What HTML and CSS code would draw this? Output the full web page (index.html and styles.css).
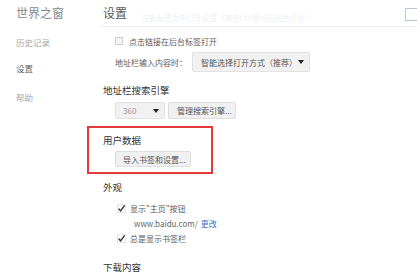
FILE: index.html
```html
<!DOCTYPE html>
<html lang="zh-CN">
<head>
<meta charset="utf-8">
<title>设置</title>
<link rel="stylesheet" href="styles.css">
</head>
<body>
<div class="page">
  <aside class="sidebar">
    <div class="brand">世界之窗</div>
    <div class="nav-item nav-history">历史记录</div>
    <div class="nav-item nav-settings active">设置</div>
    <div class="nav-item nav-help">帮助</div>
  </aside>
  <main class="main">
    <header class="header">
      <h1 class="title">设置</h1>
      <span class="hint">在新标签页中打开设置（按住Ctrl键可在后台打开）</span>
      <span class="search-box"></span>
    </header>

    <div class="row row-check first">
      <span class="checkbox"></span>
      <span class="label">点击链接在后台标签打开</span>
    </div>
    <div class="row row-select">
      <span class="label">地址栏输入内容时：</span>
      <span class="select select-wide"><span class="select-text">智能选择打开方式（推荐）</span><span class="caret"></span></span>
    </div>

    <div class="section-title s-search">地址栏搜索引擎</div>
    <div class="row row-engine">
      <span class="select select-small"><span class="select-text muted">360</span><span class="caret"></span></span>
      <span class="button">管理搜索引擎...</span>
    </div>

    <section class="highlight">
      <div class="section-title s-user">用户数据</div>
      <div class="row row-import">
        <span class="button">导入书签和设置...</span>
      </div>
    </section>

    <div class="section-title s-look">外观</div>
    <div class="row row-check look-1">
      <span class="checkbox checked"><svg width="9" height="9" viewBox="0 0 9 9"><path d="M1.6 4.6 L3.6 6.8 L7.6 1.4" fill="none" stroke="#333" stroke-width="1.4"/></svg></span>
      <span class="label">显示"主页"按钮</span>
    </div>
    <div class="row row-url">
      <span class="url">www.baidu.com/</span>
      <span class="link">更改</span>
    </div>
    <div class="row row-check look-2">
      <span class="checkbox checked"><svg width="9" height="9" viewBox="0 0 9 9"><path d="M1.6 4.6 L3.6 6.8 L7.6 1.4" fill="none" stroke="#333" stroke-width="1.4"/></svg></span>
      <span class="label">总是显示书签栏</span>
    </div>

    <div class="section-title s-download">下载内容</div>
  </main>
</div>
</body>
</html>
```
FILE: styles.css
```css
* { box-sizing: border-box; }
html, body {
  margin: 0;
  padding: 0;
  background: #fff;
  overflow: hidden;
}
body {
  font-family: "Noto Sans CJK SC", "Noto Sans", sans-serif;
  color: #555;
  width: 420px;
  height: 280px;
}
.page {
  display: flex;
  width: 420px;
  height: 280px;
}
.sidebar {
  width: 100px;
  flex-shrink: 0;
  padding-left: 16px;
}
.brand {
  font-size: 12px;
  line-height: 26px;
  height: 26px;
  color: #8a8a8a;
}
.nav-item {
  font-size: 8.5px;
  line-height: 12px;
  color: #a6a6a6;
}
.nav-history { margin-top: 10px; }
.nav-settings { margin-top: 14px; }
.nav-help { margin-top: 17px; }
.nav-item.active { color: #666; }

.main {
  flex: 1;
  padding-left: 3px;
  display: flex;
  flex-direction: column;
  align-items: flex-start;
}
.header {
  display: flex;
  align-items: flex-start;
  width: 100%;
  height: 27px;
  margin-left: -3px;
  padding-left: 3px;
  border-bottom: 1px solid #efefef;
}
.title {
  margin: 0;
  font-size: 12px;
  font-weight: normal;
  line-height: 26px;
  color: #5a5a5a;
}
.hint {
  margin-left: 15px;
  margin-top: 13px;
  font-size: 7.5px;
  line-height: 10px;
  color: #eef0f5;
  white-space: nowrap;
}
.search-box {
  margin-left: auto;
  margin-top: 8px;
  width: 12px;
  height: 13px;
  border: 1px solid #b7c6dd;
  border-right: none;
  flex-shrink: 0;
}

.row {
  display: flex;
  align-items: center;
  padding-left: 12px;
  font-size: 8px;
  white-space: nowrap;
}
.row-check { height: 14px; }
.row-check.first { margin-top: 7px; }
.checkbox {
  width: 8px;
  height: 8px;
  border: 1px solid #cfcfcf;
  background: #f4f4f4;
  margin-right: 6px;
  display: flex;
  align-items: center;
  justify-content: center;
  flex-shrink: 0;
}
.checkbox.checked {
  border: 1px solid #e4e4e4;
  background: #fafafa;
  width: 9px;
  height: 9px;
  margin-left: 2px;
  margin-right: 4px;
  overflow: visible;
}
.checkbox svg { display: block; flex-shrink: 0; }
.label { color: #5a5a5a; }

.row-select {
  height: 20px;
  margin-top: 4px;
}
.select {
  display: flex;
  align-items: center;
  height: 100%;
  background: #f1f1f1;
  border: 1px solid #e2e2e2;
  border-radius: 2px;
  color: #555;
}
.select-wide {
  margin-left: 5px;
  width: 118px;
  padding-left: 8px;
}
.select-text { flex: 1; }
.muted { color: #999; }
.caret {
  width: 0;
  height: 0;
  border-left: 3px solid transparent;
  border-right: 3px solid transparent;
  border-top: 4px solid #222;
  margin-right: 5px;
}

.section-title {
  font-size: 9.5px;
  line-height: 14px;
  color: #333;
}
.s-search { margin-top: 11px; }
.row-engine {
  height: 17px;
  margin-top: 5px;
}
.select-small {
  width: 50px;
  padding-left: 7px;
}
.button {
  display: flex;
  align-items: center;
  height: 100%;
  padding: 0 8px;
  background: #f0f0f0;
  border: 1px solid #dedede;
  border-radius: 2px;
  color: #555;
}
.row-engine .button {
  margin-left: 3px;
  width: 68px;
}

.highlight {
  margin-top: 7px;
  margin-left: -16px;
  width: 126px;
  border: 2px solid #e43a3c;
  padding: 5px 0 5px 14px;
}
.row-import {
  height: 16px;
  margin-top: 4px;
}
.row-import .button {
  width: 76px;
  padding-left: 7px;
}

.s-look { margin-top: 6px; }
.look-1 { margin-top: 7px; }
.row-url {
  height: 14px;
  margin-top: 1px;
  padding-left: 31px;
}
.url { color: #666; }
.link {
  color: #3d6fd6;
  margin-left: 3px;
}
.look-2 { margin-top: 1px; }
.s-download { margin-top: 15px; }
```
